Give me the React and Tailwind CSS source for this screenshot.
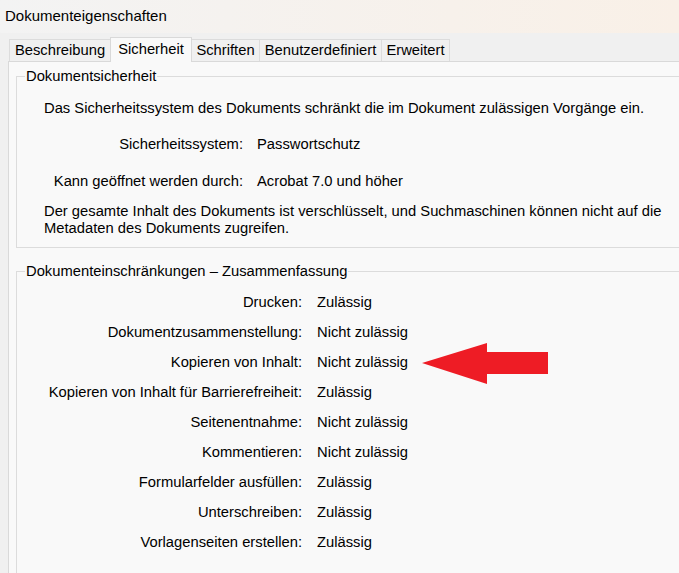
import React from 'react';

const tabs = [
    { name: 'Beschreibung', w: 'w-[102px]' },
    { name: 'Sicherheit', w: 'w-[82px]', active: true },
    { name: 'Schriften', w: 'w-[69px]' },
    { name: 'Benutzerdefiniert', w: 'w-[123px]' },
    { name: 'Erweitert', w: 'w-[69px]' },
];

const restrictions = [
    ['Drucken:', 'Zulässig'],
    ['Dokumentzusammenstellung:', 'Nicht zulässig'],
    ['Kopieren von Inhalt:', 'Nicht zulässig', true],
    ['Kopieren von Inhalt für Barrierefreiheit:', 'Zulässig'],
    ['Seitenentnahme:', 'Nicht zulässig'],
    ['Kommentieren:', 'Nicht zulässig'],
    ['Formularfelder ausfüllen:', 'Zulässig'],
    ['Unterschreiben:', 'Zulässig'],
    ['Vorlagenseiten erstellen:', 'Zulässig'],
];

function Arrow() {
    return (
        <svg className="absolute left-[404px] top-[-4px]" width="128" height="42" viewBox="0 0 128 42">
            <polygon points="1,20 66,0 66,9 127,9 127,31 66,31 66,41" fill="#ee1c25" />
        </svg>
    );
}

export default function App() {
    return (
        <div className="w-[679px] h-[573px] overflow-hidden flex flex-col bg-[#f0f0f0] text-black text-[14.75px] leading-[17px]" style={{ fontFamily: '"Liberation Sans", Arial, sans-serif' }}>
            {/* title bar */}
            <div className="h-[33px] shrink-0 flex items-center pl-[5px] pb-[3px] text-[15px] bg-gradient-to-r from-[#f3f3f3] to-[#f9f0e7]">
                Dokumenteigenschaften
            </div>

            {/* tabs */}
            <div className="h-[28px] shrink-0 flex items-end pl-[10px]">
                {tabs.map((t) => (
                    <div
                        key={t.name}
                        className={
                            t.active
                                ? t.w + ' h-[25px] -ml-px -mb-px relative z-10 flex items-center justify-center pb-[2px] bg-[#f9f9f9] border border-b-0 border-[#d9d9d9]'
                                : t.w + ' h-[22px] -ml-px flex items-center justify-center bg-[#f0f0f0] border border-b-0 border-[#dcdcdc]'
                        }
                    >
                        {t.name}
                    </div>
                ))}
            </div>

            {/* pane */}
            <div className="flex-1 ml-[8px] bg-[#f9f9f9] border-l border-t border-[#d9d9d9] pl-[7px] pt-[6px]">
                <fieldset className="border border-r-0 border-[#dcdcdc] pb-[10px]">
                    <legend className="ml-[8px] px-[1px] h-[17px]">Dokumentsicherheit</legend>
                    <div className="pt-[15px] pl-[27px]">
                        Das Sicherheitssystem des Dokuments schränkt die im Dokument zulässigen Vorgänge ein.
                    </div>
                    <div className="flex mt-[19px]">
                        <div className="w-[226px] text-right">Sicherheitssystem:</div>
                        <div className="ml-[14px]">Passwortschutz</div>
                    </div>
                    <div className="flex mt-[20px]">
                        <div className="w-[226px] text-right">Kann geöffnet werden durch:</div>
                        <div className="ml-[14px]">Acrobat 7.0 und höher</div>
                    </div>
                    <div className="mt-[13px] pl-[27px]">
                        Der gesamte Inhalt des Dokuments ist verschlüsselt, und Suchmaschinen können nicht auf die Metadaten des Dokuments zugreifen.
                    </div>
                </fieldset>

                <fieldset className="mt-[15px] border border-r-0 border-[#dcdcdc] pb-[40px]">
                    <legend className="ml-[8px] px-[1px] h-[17px]">Dokumenteinschränkungen – Zusammenfassung</legend>
                    <div className="pt-[7px]">
                        {restrictions.map(([label, value, mark]) => (
                            <div key={label} className="relative h-[30px] flex items-center">
                                <div className="w-[285px] text-right">{label}</div>
                                <div className="ml-[15px]">{value}</div>
                                {mark && <Arrow />}
                            </div>
                        ))}
                    </div>
                </fieldset>
            </div>
        </div>
    );
}
